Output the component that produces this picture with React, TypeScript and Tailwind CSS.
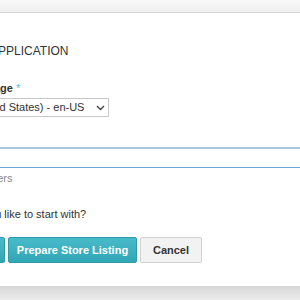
import React from "react";

function FakeSelect({ value }: { value: string }) {
  return (
    <div className="ml-[-74px] mt-[3px] flex h-[19px] w-[183px] items-center justify-between border border-[#c8c8c8] bg-white pl-[4px] pr-[3px] text-[11px] text-[#333]">
      <span className="whitespace-nowrap">{value}</span>
      <svg width="9" height="6" viewBox="0 0 9 6" className="shrink-0">
        <path d="M1 1l3.5 3.5L8 1" fill="none" stroke="#444" strokeWidth="1.4" />
      </svg>
    </div>
  );
}

export default function App() {
  return (
    <div className="flex h-[300px] w-[300px] flex-col overflow-hidden bg-white font-['Liberation_Sans',Arial,sans-serif]">
      <div className="h-[13px] shrink-0 border-b border-[#d6d6d6] bg-gradient-to-b from-[#f8f8f8] to-[#f0f0f0]" />
      <div className="flex flex-1 flex-col">
        <div className="ml-[-10px] mt-[30px] h-[16px] whitespace-nowrap text-[12px] leading-[16px] text-[#333]">
          APPLICATION
        </div>
        <div className="ml-[-39px] mt-[22px] h-[14px] whitespace-nowrap text-[11px] font-bold leading-[14px] text-[#333]">
          Language <span className="font-normal text-[#5bc0de]">*</span>
        </div>
        <FakeSelect value="English (United States) - en-US" />
        <div className="mt-[30px] h-[21px] border-t-2 border-b border-t-[#a9c6de] border-b-[#6fa8d8]" />
        <div className="ml-[-48px] mt-[3px] h-[14px] whitespace-nowrap text-[11px] leading-[14px] text-[#888]">
          0 characters
        </div>
        <div className="ml-[-77px] mt-[22px] h-[14px] whitespace-nowrap text-[11px] leading-[14px] text-[#333]">
          What would you like to start with?
        </div>
        <div className="mt-[16px] flex h-[26px] gap-[3px]">
          <button className="ml-[-75px] h-full w-[80px] shrink-0 rounded-[2px] border border-[#2f9aaa] bg-gradient-to-b from-[#48bbca] to-[#33a6b6] text-[11px] font-bold text-white">
            Create App
          </button>
          <button className="h-full w-[129px] shrink-0 rounded-[2px] border border-[#2f9aaa] bg-gradient-to-b from-[#48bbca] to-[#33a6b6] text-[11px] font-bold text-white">
            Prepare Store Listing
          </button>
          <button className="h-full w-[62px] shrink-0 rounded-[2px] border border-[#d0d0d0] bg-[#f2f2f2] text-[11px] font-bold text-[#333]">
            Cancel
          </button>
        </div>
        <div className="flex-1" />
      </div>
      <div className="h-[14px] shrink-0 bg-gradient-to-b from-[#d6d6d6] to-[#ececec]" />
    </div>
  );
}
